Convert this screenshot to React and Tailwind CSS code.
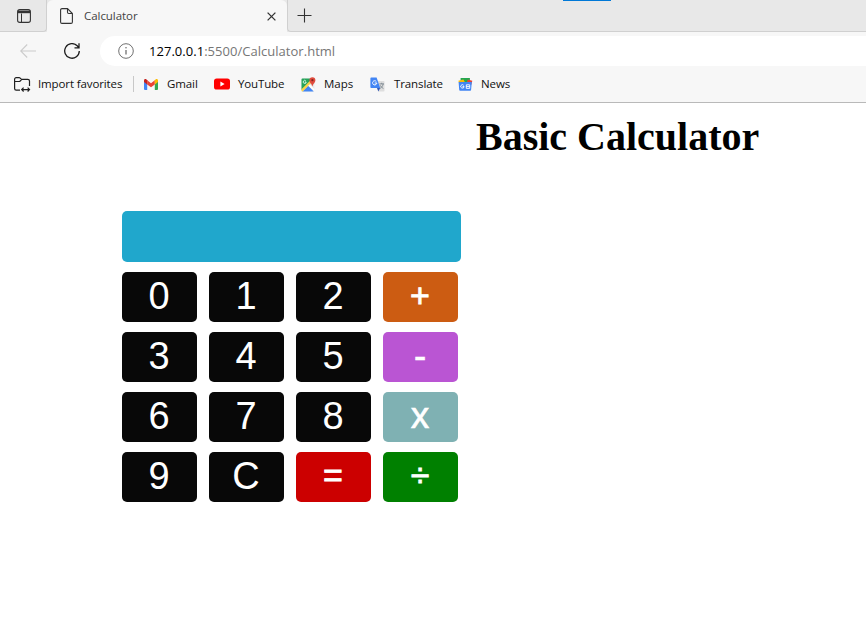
import React from "react";

const DIGIT = "bg-[#080808] pb-[2px] text-[38px]";

const KEYS = [
  { label: "0", style: DIGIT },
  { label: "1", style: DIGIT },
  { label: "2", style: DIGIT },
  { label: "+", style: "bg-[#cc5c12] pb-[4px] text-[34px] [-webkit-text-stroke:0.8px_white]" },
  { label: "3", style: DIGIT },
  { label: "4", style: DIGIT },
  { label: "5", style: DIGIT },
  { label: "-", style: "bg-[#ba55d3] pb-[2px] text-[38px] [-webkit-text-stroke:0.3px_white]" },
  { label: "6", style: DIGIT },
  { label: "7", style: DIGIT },
  { label: "8", style: DIGIT },
  { label: "x", style: "bg-[#7fb1b3] pb-[2px] text-[37px] [-webkit-text-stroke:0.6px_white]" },
  { label: "9", style: DIGIT },
  { label: "C", style: DIGIT },
  { label: "=", style: "bg-[#cc0000] pb-[4px] text-[34px] [-webkit-text-stroke:0.8px_white]" },
  { label: "÷", style: "bg-[#008000] pb-[4px] text-[34px] [-webkit-text-stroke:0.8px_white]" },
];

function TabActionsIcon() {
  return (
    <svg width="14" height="14" viewBox="0 0 14 14" fill="none" stroke="#333" strokeWidth="1.1">
      <rect x="0.6" y="0.6" width="12.8" height="12.8" rx="2.2" />
      <path d="M4.5 4.5v9" strokeWidth="1" />
      <path d="M1 2.9h12" strokeWidth="2.6" />
    </svg>
  );
}

function PageIcon() {
  return (
    <svg width="13" height="16" viewBox="0 0 13 16" fill="none" stroke="#333" strokeWidth="1.1">
      <path d="M7.5.6H2A1.4 1.4 0 0 0 .6 2v12A1.4 1.4 0 0 0 2 15.4h9a1.4 1.4 0 0 0 1.4-1.4V5.5zM7.5.6v3.7c0 .8.4 1.2 1.2 1.2h3.7" />
    </svg>
  );
}

function ImportIcon() {
  return (
    <svg width="17" height="15" viewBox="0 0 17 15" fill="none" stroke="#202020" strokeWidth="1.2">
      <path d="M6 13.2H2.2A1.7 1.7 0 0 1 .6 11.5V2.2A1.6 1.6 0 0 1 2.2.6h2.9c.5 0 .8.2 1.1.5l1.3 1.3h6.3c1 0 1.7.7 1.7 1.7v4.9M.8 4.5h4.3c.5 0 .8-.2 1.1-.5l1.3-1.4" />
      <path d="M7.8 12.6h7.6M9.6 10.7l-1.9 1.9 1.9 1.9M13.6 10.7l1.9 1.9-1.9 1.9" />
    </svg>
  );
}

function GmailIcon() {
  return (
    <svg width="14" height="11" viewBox="0 0 14 11">
      <path d="M0 2.2 3.2 4.5V11H1A1 1 0 0 1 0 10z" fill="#4285f4" />
      <path d="M14 2.2 10.8 4.5V11H13a1 1 0 0 0 1-1z" fill="#34a853" />
      <path d="m3.2 1.3 3.8 3 3.8-3v4.1L7 8.3 3.2 5.4z" fill="#ea4335" />
      <path d="M0 3V1.5C0 .1 1.5-.4 2.5.5l.7.7v4.2z" fill="#c5221f" />
      <path d="M14 3V1.5c0-1.4-1.5-1.9-2.5-1l-.7.7v4.2z" fill="#fbbc04" />
    </svg>
  );
}

function YouTubeIcon() {
  return (
    <svg width="16" height="12" viewBox="0 0 16 12">
      <rect y="0.4" width="16" height="11.2" rx="2.7" fill="#f00" />
      <path d="M6.4 3.6v4.8l4.2-2.4z" fill="#fff" />
    </svg>
  );
}

function MapsIcon() {
  return (
    <svg width="15" height="15" viewBox="0 0 15 15">
      <rect x="0.5" y="1.5" width="12.8" height="13" rx="1" fill="#e8e9e8" />
      <path d="M.5 13V2.5a1 1 0 0 1 1-1H10L9.5 5z" fill="#27a35a" />
      <path d="m1.4 14.5 5.7-5.7 5.6 5.7z" fill="#4285f4" />
      <path d="m.5 12.2 9-9 1.7 1.7-9.6 9.6a1 1 0 0 1-1.1-1z" fill="#f8d24b" />
      <path d="m7.3 8.8 1.4-1.4 4.6 4.7v2z" fill="#fff" />
      <path d="M4.8 3.9a1.5 1.5 0 1 0 .4 1.2H3.8" fill="none" stroke="#e9fff0" strokeWidth="0.9" />
      <path d="M11.4.2a3 3 0 0 1 3 3c0 2.5-2.2 3.1-3 6.3-.8-3.2-3-3.8-3-6.3a3 3 0 0 1 3-3z" fill="#df4b3d" />
      <circle cx="11.4" cy="3.2" r="1.1" fill="#85261e" />
    </svg>
  );
}

function TranslateIcon() {
  return (
    <svg width="16" height="15" viewBox="0 0 16 15">
      <path d="M5 4h8.7c.5 0 .8.3.8.8v8.9c0 .5-.3.8-.8.8H8.3z" fill="#dedede" />
      <path d="M9.4 6.9h4.6M11.7 5.8v1.1M13.2 6.9c-.4 2-1.5 3.4-3 4.5M10.2 8.3c.7 1.5 1.7 2.5 3.2 3.2" fill="none" stroke="#7b8790" strokeWidth="0.9" />
      <path d="m7 11 3.2 0L8.3 14.5z" fill="#3257b5" />
      <path d="M1.2.5h5.4L10.2 11H1.2a.8.8 0 0 1-.8-.8V1.3c0-.5.3-.8.8-.8z" fill="#4285f4" />
      <path d="M6.3 4.5A2.1 2.1 0 1 0 6.8 6H4.7" fill="none" stroke="#fff" strokeWidth="1" />
    </svg>
  );
}

function NewsIcon() {
  return (
    <svg width="15" height="13" viewBox="0 0 15 13">
      <path d="M2.6 0h9.3v5H2.6z" fill="#25a650" />
      <path d="m9.8 1.5 4.5 1.2-1 4H8z" fill="#ea4335" />
      <path d="m.4 2.8 5-1.3L8 6H1.3z" fill="#fbbc04" />
      <path d="M.6 4h13.2l-.7 7.8a.9.9 0 0 1-.9.9H2.1a.9.9 0 0 1-.9-.9z" fill="#4285f4" />
      <path d="M5.7 7.3a1.7 1.7 0 1 0 .4 1.3H4.5M8.3 6.8h3.4v3.6H8.3zM8.3 8.6h3.4" fill="none" stroke="#fff" strokeWidth="0.9" />
    </svg>
  );
}

function Chrome() {
  return (
    <header className="h-[103px] overflow-hidden border-b border-[#b9b9b9] bg-[#f7f7f7] font-['Open_Sans','Noto_Sans',sans-serif] text-[12px] text-[#111]">
      <div className="relative flex h-8 bg-[#e8e8e8]">
        <div className="flex w-[47px] items-center justify-center rounded-br-[4px] border-r border-b border-[#d0d0d0] pl-px">
          <TabActionsIcon />
        </div>
        <div className="flex w-[240px] items-center rounded-t-[6px] bg-[#f7f7f7] pl-[13px] text-[#444]">
          <PageIcon />
          <span className="ml-[11px] text-[11.5px] tracking-[-0.05px]">Calculator</span>
          <svg className="mr-[11px] ml-auto" width="9" height="9" viewBox="0 0 9 9" fill="none" stroke="#333" strokeWidth="1.3">
            <path d="m.6.6 7.8 7.8M8.4.6.6 8.4" />
          </svg>
        </div>
        <div className="flex flex-1 items-center rounded-bl-[4px] border-b border-l border-[#d0d0d0] pl-[9px]">
          <svg width="15" height="15" viewBox="0 0 15 15" stroke="#333" strokeWidth="1.1">
            <path d="M7.5 .5v14M.5 7.5h14" />
          </svg>
        </div>
        <div className="absolute top-0 left-[563px] h-px w-12 bg-[#0078d7]" />
      </div>
      <div className="flex h-[38px] items-center">
        <svg className="ml-5" width="16" height="14" viewBox="0 0 16 14" fill="none" stroke="#cbcbcb" strokeWidth="1.1">
          <path d="M16 7H.8M7.2.5.7 7l6.5 6.5" />
        </svg>
        <svg className="ml-7" width="16" height="16" viewBox="0 0 16 16" fill="none" stroke="#1d1d1d" strokeWidth="1.3">
          <path d="M15.3 8A7.3 7.3 0 1 1 13.2 2.8L14.8 4.7M15 .3v4.5h-4.5" />
        </svg>
        <div className="ml-[20px] flex h-[30px] flex-1 items-center rounded-l-full bg-white pl-[18px]">
          <svg width="16" height="16" viewBox="0 0 16 16" fill="none" stroke="#707070">
            <circle cx="8" cy="8" r="7.3" />
            <path d="M8 7v4.6" strokeWidth="1.3" />
            <circle cx="8" cy="4.8" r="0.8" fill="#707070" stroke="none" />
          </svg>
          <span className="ml-[15px] pt-px text-[13px] tracking-[0.03px] whitespace-nowrap text-[#767676]">
            <span className="text-black">127.0.0.1</span>:5500/Calculator.html
          </span>
        </div>
      </div>
      <nav className="flex h-[28px] items-center whitespace-nowrap">
        <div className="flex w-[130px] items-center pl-[14px]">
          <ImportIcon />
          <span className="ml-[7px] text-[11.5px] tracking-[-0.12px]">Import favorites</span>
        </div>
        <div className="ml-[3px] h-4 w-px bg-[#c8c8c8]" />
        <div className="flex w-[80px] items-center pl-[10px]">
          <GmailIcon />
          <span className="ml-[9px] text-[11.5px] tracking-[-0.1px]">Gmail</span>
        </div>
        <div className="flex w-[87px] items-center">
          <YouTubeIcon />
          <span className="ml-[8px] text-[11.5px] tracking-[-0.15px]">YouTube</span>
        </div>
        <div className="flex w-[69px] items-center">
          <MapsIcon />
          <span className="ml-[8px] text-[11.5px]">Maps</span>
        </div>
        <div className="flex w-[88px] items-center">
          <TranslateIcon />
          <span className="ml-[8px] text-[11.5px] tracking-[-0.1px]">Translate</span>
        </div>
        <div className="flex items-center">
          <NewsIcon />
          <span className="ml-[8px] text-[11.5px] tracking-[-0.1px]">News</span>
        </div>
      </nav>
    </header>
  );
}

export default function App() {
  return (
    <div className="h-[629px] w-[866px] overflow-hidden bg-white">
      <Chrome />
      <main>
        <h1 className="pt-[11px] pl-[476px] font-['Liberation_Serif',serif] text-[40px] leading-[46px] font-bold text-black">
          Basic Calculator
        </h1>
        <section className="mt-[51px] ml-[122px] w-[339px]">
          <div className="h-[51px] rounded-[5px] bg-[#20a7cc]" />
          <div className="mt-[10px] grid grid-cols-[repeat(4,75px)] gap-x-3 gap-y-[10px]">
            {KEYS.map((key) => (
              <button
                key={key.label}
                className={`h-[50px] rounded-[5px] pr-px text-center font-['Liberation_Sans',sans-serif] leading-[46px] text-white ${key.style}`}
              >
                {key.label}
              </button>
            ))}
          </div>
        </section>
      </main>
    </div>
  );
}
